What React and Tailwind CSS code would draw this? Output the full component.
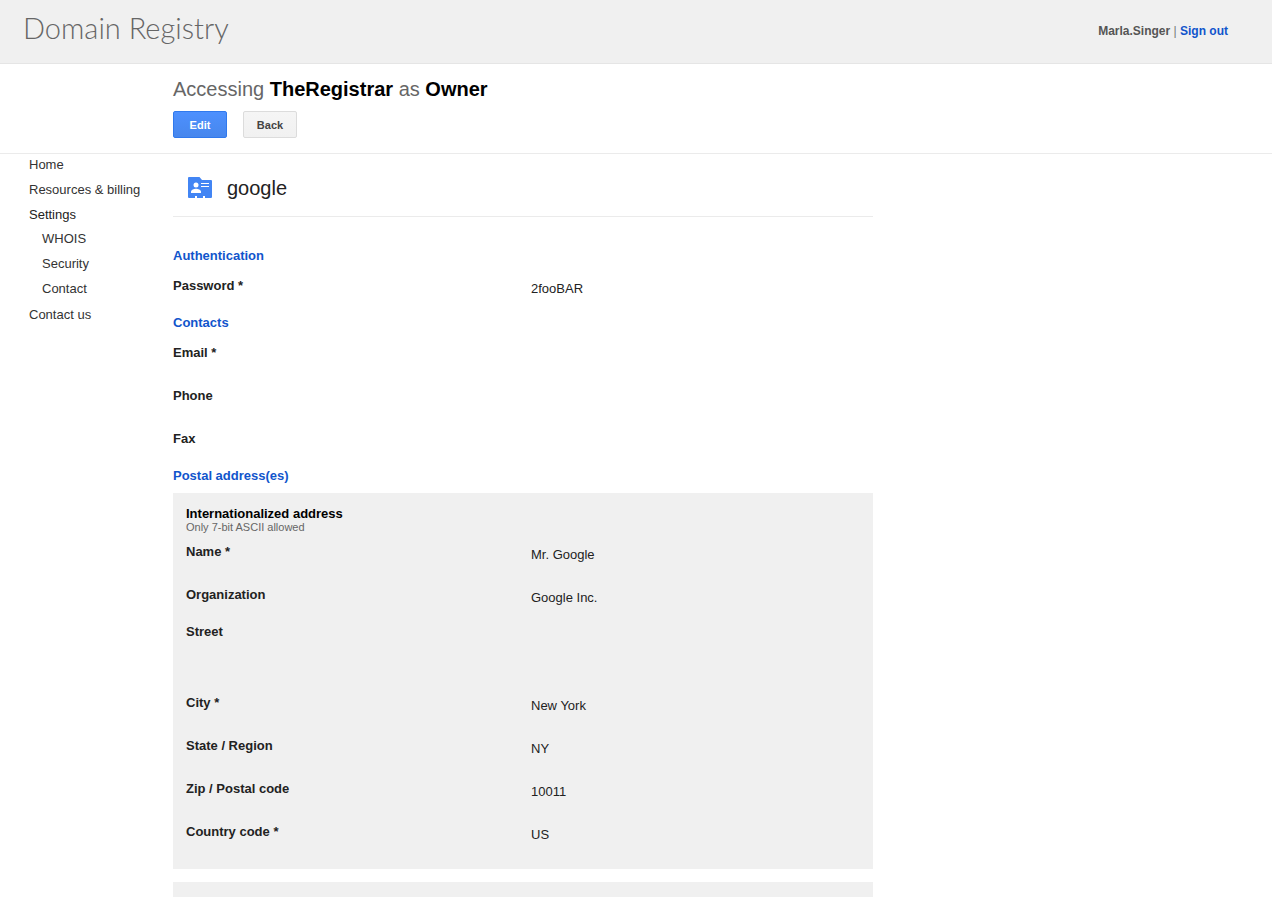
const contactRows = [
  { label: "Email *", value: "" },
  { label: "Phone", value: "" },
  { label: "Fax", value: "" },
];

const nameRows = [
  { label: "Name *", value: "Mr. Google" },
  { label: "Organization", value: "Google Inc." },
];

const localityRows = [
  { label: "City *", value: "New York" },
  { label: "State / Region", value: "NY" },
  { label: "Zip / Postal code", value: "10011" },
  { label: "Country code *", value: "US" },
];

function Rows({ rows }) {
  return (
    <dl className="flex flex-col gap-1.5">
      {rows.map((row) => (
        <div key={row.label} className="grid h-[37px] grid-cols-[1fr_342px] leading-5">
          <dt className="font-bold">{row.label}</dt>
          <dd className="pt-[3px]">{row.value}</dd>
        </div>
      ))}
    </dl>
  );
}

function SectionTitle({ children }) {
  return <h2 className="font-bold leading-5 text-[#1155cc]">{children}</h2>;
}

function ContactIcon() {
  return (
    <svg width="24" height="22" viewBox="0 0 24 22" aria-hidden="true" className="shrink-0">
      <path
        fill="#4285f4"
        d="M1 0h10.500L14 3h9q1 0 1 1v16q0 1-1 1h-6v-2h-2v2H9v-2H7v2H1q-1 0-1-1V1q0-1 1-1z"
      />
      <circle cx="8" cy="8" r="2.500" fill="#fff" />
      <path fill="#fff" d="M3 16v-1.300c0-2 3-3 5-3s5 1 5 3V16z" />
      <path fill="#fff" d="M13 6h8v1h-8zM13 9h8v1h-8z" />
    </svg>
  );
}

function NavLink({ children }) {
  return (
    <a href="#" className="block leading-5 hover:underline">
      {children}
    </a>
  );
}

export default function App() {
  return (
    <div className="flex min-h-screen flex-col bg-white font-['Liberation_Sans',Arial,sans-serif] text-[13px] text-[#222]">
      <header className="flex h-16 items-center justify-between border-b border-[#e5e5e5] bg-[#f0f0f0] pr-11 pl-[23px]">
        <div className="pb-2 font-['Lato',sans-serif] text-[29px] leading-10 font-light text-[#666]">
          Domain Registry
        </div>
        <div className="pb-0.5 text-xs text-[#777]">
          <span className="font-bold text-[#555]">Marla.Singer</span> |{" "}
          <a href="#" className="font-bold text-[#1155cc]">
            Sign out
          </a>
        </div>
      </header>

      <div className="h-[90px] border-b border-[#ebebeb] pt-3 pl-[173px]">
        <h1 className="text-xl leading-[26px] text-[#666]">
          Accessing <b className="text-black">TheRegistrar</b> as <b className="text-black">Owner</b>
        </h1>
        <div className="mt-[9px] flex gap-4 text-[11px] font-bold">
          <button
            type="button"
            className="h-[27px] w-[54px] rounded-xs border border-[#3079ed] bg-linear-to-b from-[#4d90fe] to-[#4787ed] pt-0.5 text-white"
          >
            Edit
          </button>
          <button
            type="button"
            className="h-[27px] w-[54px] rounded-xs border border-[#dcdcdc] bg-linear-to-b from-[#f5f5f5] to-[#f1f1f1] pt-0.5 text-[#444]"
          >
            Back
          </button>
        </div>
      </div>

      <div className="flex flex-1">
        <nav className="w-[173px] shrink-0 pt-px pl-[29px] text-[#333]">
          <ul className="flex flex-col">
            <li className="mb-[5px]"><NavLink>Home</NavLink></li>
            <li className="mb-[5px]"><NavLink>Resources &amp; billing</NavLink></li>
            <li className="mb-1.5 text-[#222]">
              <NavLink>Settings</NavLink>
              <ul className="mt-1 flex flex-col gap-[5px] pl-[13px] text-[#333]">
                <li><NavLink>WHOIS</NavLink></li>
                <li><NavLink>Security</NavLink></li>
                <li><NavLink>Contact</NavLink></li>
              </ul>
            </li>
            <li><NavLink>Contact us</NavLink></li>
          </ul>
        </nav>

        <main className="flex w-full max-w-[700px] flex-col">
          <div className="mb-[29px] flex h-[63px] items-center gap-[15px] border-b border-[#ebebeb] pt-1.5 pl-[15px]">
            <ContactIcon />
            <h1 className="text-xl leading-6">google</h1>
          </div>

          <SectionTitle>Authentication</SectionTitle>
          <div className="pt-2.5">
            <Rows rows={[{ label: "Password *", value: "2fooBAR" }]} />
          </div>

          <SectionTitle>Contacts</SectionTitle>
          <div className="pt-2.5">
            <Rows rows={contactRows} />
          </div>

          <SectionTitle>Postal address(es)</SectionTitle>
          <section className="mt-[7px] bg-[#f0f0f0] pt-[14px] pb-2.5 pl-[13px]">
            <h3 className="leading-[14px] font-bold text-black">Internationalized address</h3>
            <p className="mb-[9px] text-[11px] leading-3 text-[#666]">Only 7-bit ASCII allowed</p>
            <Rows rows={nameRows} />
            <div className="h-[71px] leading-5 font-bold">Street</div>
            <Rows rows={localityRows} />
          </section>
          <section className="mt-[13px] min-h-[15px] flex-1 bg-[#f0f0f0]" />
        </main>
      </div>
    </div>
  );
}
